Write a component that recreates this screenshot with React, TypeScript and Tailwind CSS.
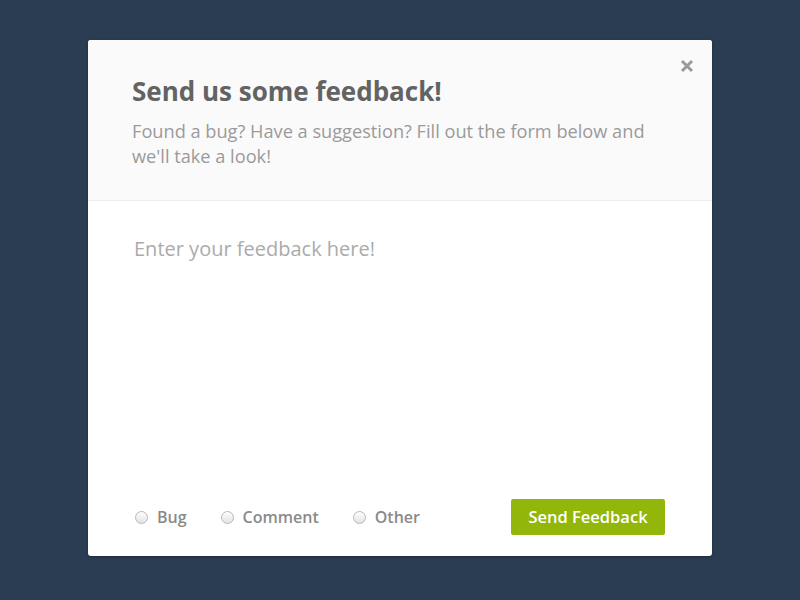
import React from "react";

function Radio({ label }: { label: string }) {
  return (
    <label className="flex items-center gap-[9px] cursor-pointer">
      <span className="block w-[13px] h-[13px] rounded-full border border-[#b8b8b8] bg-gradient-to-b from-[#fdfdfd] to-[#e4e4e4]" />
      <span className="text-[16px] leading-[22px] font-semibold text-[#8a8a8a]">{label}</span>
    </label>
  );
}

export default function App() {
  return (
    <div
      className="w-full h-[600px] bg-[#2b3d52] flex justify-center pt-[40px]"
      style={{ fontFamily: '"Open Sans", "Noto Sans", sans-serif' }}
    >
      <div className="relative w-[624px] h-[516px] bg-white rounded-[3px] flex flex-col overflow-hidden shadow-[0_1px_3px_rgba(0,0,0,0.3)]">
        <button className="absolute right-[18px] top-[19px] w-[14px] h-[14px] flex items-center justify-center">
          <svg width="14" height="14" viewBox="0 0 14 14">
            <path d="M2 2 L12 12 M12 2 L2 12" stroke="#9a9a9a" strokeWidth="3" strokeLinecap="butt" />
          </svg>
        </button>
        <div className="bg-[#fafafa] border-b border-[#ececec] px-[44px] pt-[34px] pb-[31px]">
          <h1 className="text-[26px] leading-[34px] font-bold text-[#636363]">Send us some feedback!</h1>
          <p className="mt-[11px] text-[18.2px] leading-[25px] text-[#9a9a9a]">
            Found a bug? Have a suggestion? Fill out the form below and we'll take a look!
          </p>
        </div>
        <div className="flex-1 flex flex-col">
          <textarea
            className="flex-1 resize-none outline-none px-[46px] pt-[35px] text-[20px] leading-[26px] text-[#666] placeholder:text-[#ababab] bg-transparent"
            style={{ fontFamily: '"Open Sans", "Noto Sans", sans-serif' }}
            placeholder="Enter your feedback here!"
          />
          <div className="flex items-center justify-between pl-[47px] pr-[47px] pb-[21px]">
            <div className="flex items-center gap-[34px]">
              <Radio label="Bug" />
              <Radio label="Comment" />
              <Radio label="Other" />
            </div>
            <button className="w-[154px] h-[36px] rounded-[2px] bg-[#93b60a] text-white text-[16.5px] font-semibold flex items-center justify-center">
              Send Feedback
            </button>
          </div>
        </div>
      </div>
    </div>
  );
}
